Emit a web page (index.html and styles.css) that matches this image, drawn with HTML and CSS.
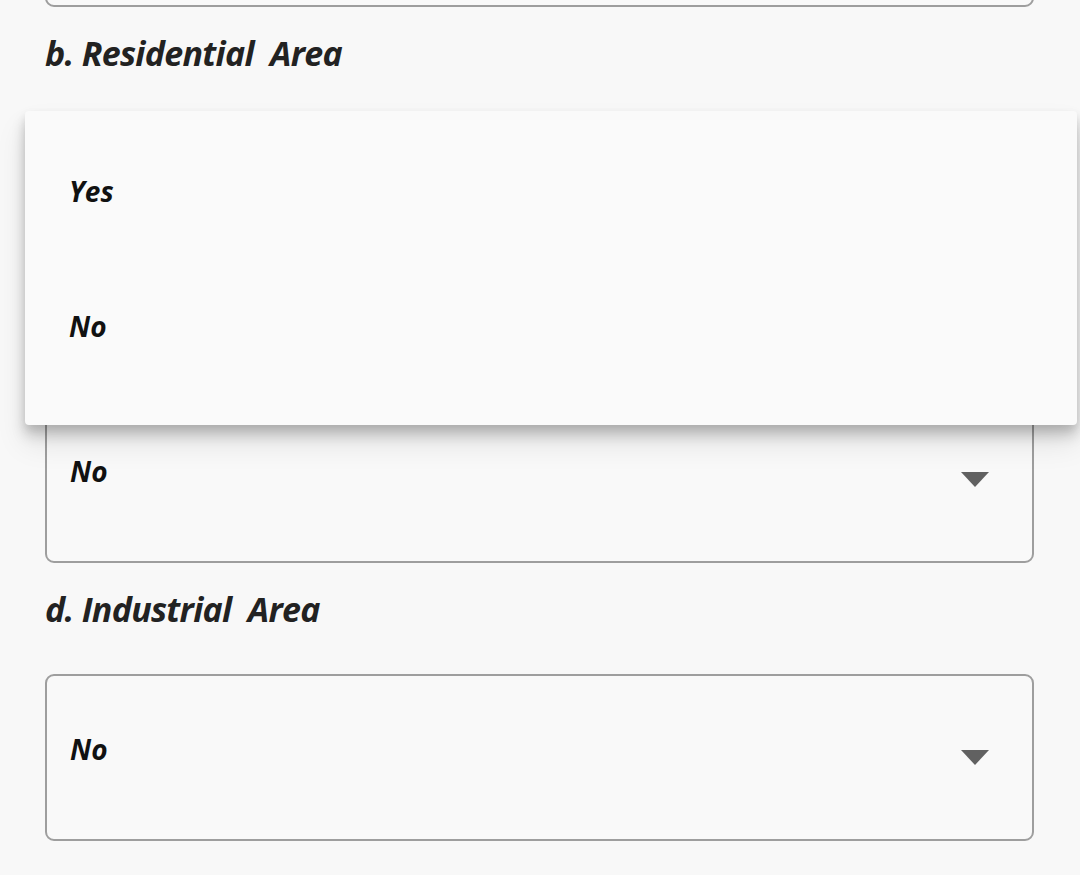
FILE: index.html
```html
<!DOCTYPE html>
<html>
<head>
<meta charset="utf-8">
<link rel="stylesheet" href="styles.css">
</head>
<body>
<div class="page">
  <div class="form">
    <div class="select select-top"><span class="value hidden">No</span><span class="caret"></span></div>
    <div class="label">b. Residential&nbsp; Area</div>
    <div class="select"><span class="value hidden">No</span><span class="caret"></span></div>
    <div class="label hidden">c. Commercial&nbsp; Area</div>
    <div class="select"><span class="value">No</span><span class="caret"></span></div>
    <div class="label">d. Industrial&nbsp; Area</div>
    <div class="select"><span class="value">No</span><span class="caret"></span></div>
  </div>
  <div class="menu">
    <div class="option">Yes</div>
    <div class="option">No</div>
  </div>
</div>
</body>
</html>
```
FILE: styles.css
```css
html, body {
  margin: 0;
  padding: 0;
  background: #f8f8f8;
}
.page {
  position: relative;
  width: 1080px;
  height: 875px;
  overflow: hidden;
  font-family: "Open Sans", "Noto Sans", sans-serif;
  font-style: italic;
  font-weight: 700;
}
.form {
  display: flex;
  flex-direction: column;
  padding: 0 46px 0 45px;
}
.select {
  box-sizing: border-box;
  height: 167px;
  border: 2.5px solid #9e9e9e;
  border-radius: 9px;
  display: flex;
  align-items: center;
  justify-content: space-between;
  padding: 0 43px 0 23px;
  background: #f9f9f9;
}
.select-top {
  margin-top: -160px;
}
.value {
  font-size: 28px;
  color: #111;
  margin-top: -18px;
}
.hidden {
  visibility: hidden;
}
.caret {
  width: 0;
  height: 0;
  border-left: 14px solid transparent;
  border-right: 14px solid transparent;
  border-top: 15px solid #616161;
}
.label {
  height: 111px;
  display: flex;
  align-items: center;
  margin-top: -10px;
  margin-bottom: 10px;
  font-size: 34px;
  font-stretch: 92%;
  color: #222;
  letter-spacing: -0.7px;
}
.menu {
  position: absolute;
  left: 25px;
  top: 111px;
  width: 1052px;
  height: 314px;
  background: #fafafa;
  border-radius: 4px;
  box-shadow: 0 10px 14px rgba(0,0,0,0.18), 0 18px 30px rgba(0,0,0,0.10), 0 4px 8px rgba(0,0,0,0.08);
  display: flex;
  flex-direction: column;
  padding-top: 12px;
  box-sizing: border-box;
}
.option {
  height: 135px;
  display: flex;
  align-items: center;
  padding-left: 44px;
  font-size: 28px;
  color: #111;
}
```
